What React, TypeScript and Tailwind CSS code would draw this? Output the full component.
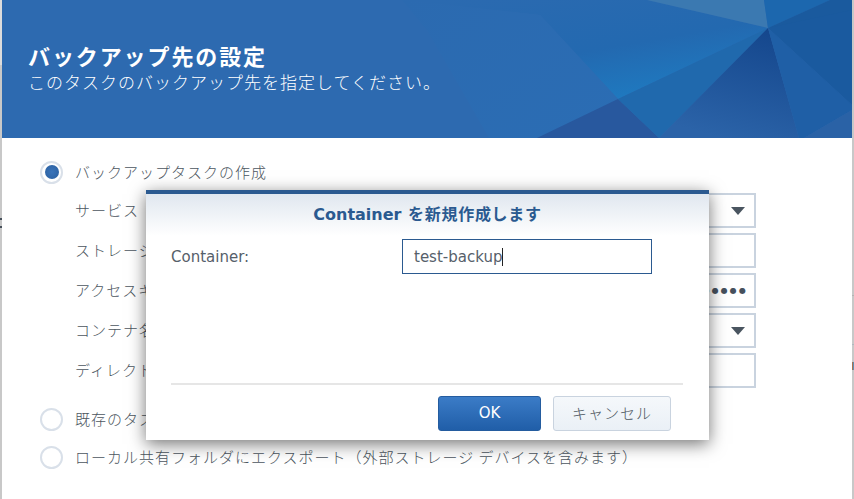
const jp = "font-['Noto_Sans_CJK_JP','Noto_Sans',sans-serif]";
const latin = "font-['DejaVu_Sans',sans-serif]";

function HeaderArt() {
  return (
    <svg className="absolute inset-0 h-full w-full" viewBox="0 0 850 138" preserveAspectRatio="none">
      <defs>
        <linearGradient id="mid" x1="0.1" y1="0" x2="0.75" y2="1">
          <stop offset="0" stopColor="#2b6ab0" />
          <stop offset="0.55" stopColor="#2369b0" />
          <stop offset="1" stopColor="#1e7cc2" />
        </linearGradient>
        <linearGradient id="dark" x1="0.8" y1="0" x2="0.45" y2="1">
          <stop offset="0" stopColor="#14468c" />
          <stop offset="1" stopColor="#2b63a8" />
        </linearGradient>
        <linearGradient id="left" x1="0" y1="0" x2="1" y2="1">
          <stop offset="0" stopColor="#2b6ab0" />
          <stop offset="1" stopColor="#2b6db4" />
        </linearGradient>
      </defs>
      <rect width="850" height="138" fill="#2d6ab0" />
      <polygon points="400,0 645,0 766,28 616,99 538,15" fill="url(#mid)" />
      <polygon points="425,30 400,0 538,15 616,99 535,138 487,138" fill="url(#left)" />
      <polygon points="616,99 535,138 657,138" fill="#28589e" />
      <polygon points="616,99 766,28 657,138" fill="#2069ad" />
      <polygon points="766,28 657,138 797,138" fill="url(#dark)" />
      <polygon points="766,28 850,105 850,110 802,138 797,138" fill="#1f5fa6" />
      <polygon points="766,28 850,0 850,105" fill="#1a5a9f" />
      <polygon points="645,0 762,0 766,28" fill="#3b79b1" />
      <polygon points="762,0 828,0 766,28" fill="#1c67ae" />
      <polygon points="828,0 850,0 850,10 766,28" fill="#1a5a9e" />
      <polygon points="850,110 802,138 850,138" fill="#2a62a6" />
    </svg>
  );
}

function Radio({ checked }: { checked?: boolean }) {
  return (
    <span className="flex h-[23px] w-[23px] items-center justify-center rounded-full border-2 border-[#d9e0e9] bg-white">
      {checked ? <span className="h-[14px] w-[14px] rounded-full bg-[radial-gradient(circle,#3a74ba_0%,#2a5f9f_100%)]" /> : null}
    </span>
  );
}

function Field({ label, pad = "pr-[9px]", children }: { label: string; pad?: string; children?: React.ReactNode }) {
  return (
    <div className="flex h-[35px] items-center">
      <span className="w-[225px] text-[15px] font-light tracking-[1px] text-[#4c5660]">{label}</span>
      <div className={`flex h-[35px] w-[456px] items-center justify-end overflow-hidden border-2 border-[#c9d3df] bg-white ${pad}`}>
        {children}
      </div>
    </div>
  );
}

function Arrow() {
  return (
    <svg width="14" height="8" viewBox="0 0 14 8">
      <polygon points="0,0 14,0 7,8" fill="#4a5560" />
    </svg>
  );
}

export default function App() {
  return (
    <div className={`flex h-[499px] w-[854px] overflow-hidden bg-white ${jp}`}>
      <div className="relative w-[2px] bg-[#c8c8c8]">
        <div className="h-[65px] bg-[#dcdcdc]" />
        <span className="absolute left-0 top-[218px] h-[2px] w-[2px] bg-[#46505a]" />
        <span className="absolute left-0 top-[226px] h-[2px] w-[2px] bg-[#46505a]" />
      </div>

      <div className="relative w-[850px]">
        <header className="relative h-[138px]">
          <HeaderArt />
          <div className="relative pl-[26px] pt-[41px] text-white">
            <h1 className="text-[22px] leading-[28px] font-bold tracking-[1.9px]">バックアップ先の設定</h1>
            <p className="mt-[1px] text-[17px] leading-[23px] font-light tracking-[1px]">このタスクのバックアップ先を指定してください。</p>
          </div>
        </header>

        <main className="pl-[38px] pt-[22px]">
          <div className="flex h-[24px] items-center gap-[12px] text-[15px] font-light tracking-[1px] text-[#4c5660]">
            <Radio checked />
            <span>バックアップタスクの作成</span>
          </div>
          <div className="mt-[9px] flex flex-col gap-[5px] pl-[35px]">
            <Field label="サービス"><Arrow /></Field>
            <Field label="ストレージ" />
            <Field label="アクセスキー" pad="pr-[6px]">
              <span className={`whitespace-nowrap text-[8px] leading-none tracking-[2.1px] text-[#46505c] ${latin}`}>●●●●●●●●</span>
            </Field>
            <Field label="コンテナ名"><Arrow /></Field>
            <Field label="ディレクトリ" />
          </div>
          <div className="mt-[19px] flex h-[24px] items-center gap-[12px] text-[15px] font-light tracking-[1px] text-[#4c5660]">
            <Radio />
            <span>既存のタスクに接続</span>
          </div>
          <div className="mt-[14px] flex h-[24px] items-center gap-[12px] text-[15px] font-light tracking-[1px] text-[#4c5660]">
            <Radio />
            <span>ローカル共有フォルダにエクスポート（外部ストレージ デバイスを含みます）</span>
          </div>
        </main>

        <div className="absolute left-[144px] top-[190px] flex h-[250px] w-[563px] flex-col border-t-4 border-[#2b5a90] bg-white shadow-[0_4px_16px_rgba(0,0,0,0.55)]">
          <div className="h-[42px] bg-gradient-to-b from-[#e0e7ef] to-white pt-[8px] text-center text-[16px] leading-[22px] font-bold text-[#2b5a90]">
            <span className={latin}>Container</span> <span className={`ml-[3px] tracking-[0.7px] ${jp}`}>を新規作成します</span>
          </div>
          <div className="flex flex-1 flex-col px-[25px]">
            <div className="mt-[3px] flex h-[35px] items-center">
              <label className={`w-[231px] pt-[1px] text-[15px] text-[#56606a] ${latin}`}>Container:</label>
              <div className={`flex h-[35px] w-[250px] items-center border border-[#2b5a90] pl-[11px] pt-[1px] text-[15px] text-[#56606a] ${latin}`}>
                test-backup
                <span className="h-[18px] w-px bg-[#222]" />
              </div>
            </div>
            <div className="mt-[109px] h-[2px] w-[512px] bg-[#e6e6e6]" />
            <div className="mt-[11px] flex w-[500px] justify-end gap-[12px]">
              <button className={`h-[35px] w-[103px] rounded-[3px] border border-[#245c9f] bg-gradient-to-b from-[#3b7cc7] to-[#205ea8] text-[15px] text-white ${latin}`}>OK</button>
              <button className={`h-[35px] w-[118px] rounded-[3px] border border-[#c9d3df] bg-gradient-to-b from-[#f5f8fb] to-[#eaf0f6] text-[15px] font-light tracking-[1px] text-[#4c5660] ${jp}`}>キャンセル</button>
            </div>
          </div>
        </div>
      </div>

      <div className="relative w-[2px] bg-[#c8c8c8]">
        <span className="absolute left-0 top-[295px] h-px w-[2px] bg-[#b4b4b4]" />
        <span className="absolute left-0 top-[344px] h-px w-[2px] bg-[#b0b8c0]" />
        <span className="absolute left-0 top-[362px] h-[8px] w-[1px] bg-[#a8734f]" />
        <span className="absolute left-[1px] top-[362px] h-[8px] w-[1px] bg-[#5f8fb5]" />
      </div>
    </div>
  );
}
